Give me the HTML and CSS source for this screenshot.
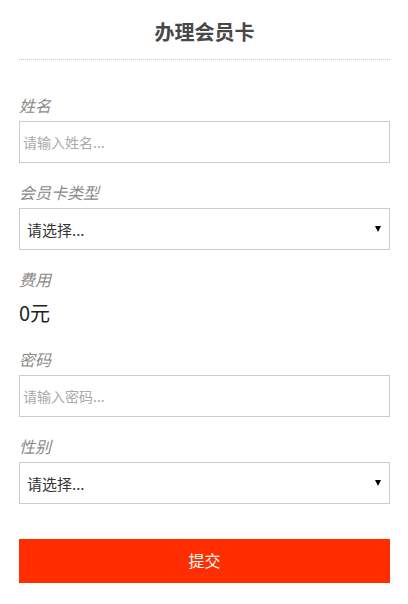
FILE: index.html
```html
<!DOCTYPE html>
<html lang="zh-CN">
<head>
<meta charset="utf-8">
<title>办理会员卡</title>
<link rel="stylesheet" href="styles.css">
</head>
<body>
<div class="page">
  <h1 class="title">办理会员卡</h1>
  <form class="form">
    <div class="field">
      <label class="label">姓名</label>
      <input class="input" type="text" placeholder="请输入姓名...">
    </div>
    <div class="field">
      <label class="label">会员卡类型</label>
      <div class="select-wrap">
        <select class="select"><option>请选择...</option></select>
      </div>
    </div>
    <div class="field">
      <label class="label">费用</label>
      <div class="value">0元</div>
    </div>
    <div class="field">
      <label class="label">密码</label>
      <input class="input" type="password" placeholder="请输入密码...">
    </div>
    <div class="field">
      <label class="label">性别</label>
      <div class="select-wrap">
        <select class="select"><option>请选择...</option></select>
      </div>
    </div>
    <button class="submit" type="button">提交</button>
  </form>
</div>
</body>
</html>
```
FILE: styles.css
```css
html, body {
  margin: 0;
  padding: 0;
  background: #fff;
}
body {
  font-family: "Noto Sans CJK SC", "Noto Sans", sans-serif;
  color: #333;
}
.page {
  padding: 0 18px 0 19px;
}
.title {
  margin: 0;
  padding: 20px 0 15px;
  font-size: 20px;
  line-height: 24px;
  font-weight: bold;
  color: #484848;
  text-align: center;
  border-bottom: 1px dotted #c8c8c8;
}
.form {
  display: flex;
  flex-direction: column;
  padding-top: 16px;
}
.field {
  margin-top: 19px;
}
.label {
  display: block;
  height: 20px;
  line-height: 20px;
  font-size: 16px;
  font-style: italic;
  color: #8a8a8a;
  margin-bottom: 6px;
}
.input {
  display: block;
  box-sizing: border-box;
  width: 100%;
  height: 42px;
  margin: 0;
  padding: 0 3px;
  border: 1px solid #ccc;
  border-radius: 0;
  font-family: inherit;
  font-size: 14px;
  color: #333;
  outline: none;
}
.input::placeholder {
  color: #aaa;
}
.select-wrap {
  position: relative;
}
.select-wrap::after {
  content: "";
  position: absolute;
  right: 9px;
  top: 18px;
  border-left: 3px solid transparent;
  border-right: 3px solid transparent;
  border-top: 6px solid #000;
  pointer-events: none;
}
.select {
  display: block;
  box-sizing: border-box;
  width: 100%;
  height: 42px;
  margin: 0;
  padding: 0 20px 0 7px;
  border: 1px solid #ccc;
  border-radius: 0;
  background: #fff;
  font-family: inherit;
  font-size: 15px;
  color: #333;
  -webkit-appearance: none;
  appearance: none;
  outline: none;
}
.value {
  line-height: 35px;
  font-size: 20px;
  color: #222;
}
.submit {
  display: block;
  box-sizing: border-box;
  width: 100%;
  height: 44px;
  margin-top: 35px;
  border: none;
  border-radius: 0;
  background: #ff2d00;
  color: #fff;
  font-family: inherit;
  font-size: 16px;
  padding: 0 0 3px;
}
```
